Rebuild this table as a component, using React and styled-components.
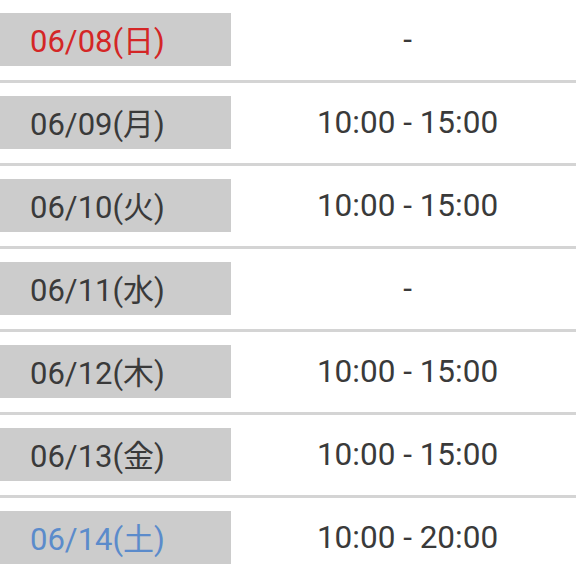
import React from "react";
import styled, { createGlobalStyle } from "styled-components";

const GlobalStyle = createGlobalStyle`
    html, body {
        margin: 0;
        padding: 0;
        background: #fff;
    }
    body {
        font-family: Roboto, "Noto Sans CJK JP", sans-serif;
        color: #3a3a3a;
    }
`;

const Table = styled.div`
    width: 576px;
    display: flex;
    flex-direction: column;
`;

const Row = styled.div`
    display: flex;
    align-items: center;
    padding: 13px 0 14px;
    border-bottom: 3px solid #d4d4d4;
`;

const DateCell = styled.div`
    width: 231px;
    height: 53px;
    flex-shrink: 0;
    box-sizing: border-box;
    padding: 0 0 3px 30px;
    display: flex;
    align-items: center;
    background-color: #cccccc;
    font-size: 31px;
    color: ${(p) => (p.$day === 0 ? "#d42626" : p.$day === 6 ? "#5b8bcb" : "#3a3a3a")};
`;

const TimeCell = styled.div`
    flex: 1;
    padding-left: 8px;
    text-align: center;
    font-size: 31.5px;
    color: #3a3a3a;
`;

const schedule = [
    { date: "06/08(日)", day: 0, time: "-" },
    { date: "06/09(月)", day: 1, time: "10:00 - 15:00" },
    { date: "06/10(火)", day: 2, time: "10:00 - 15:00" },
    { date: "06/11(水)", day: 3, time: "-" },
    { date: "06/12(木)", day: 4, time: "10:00 - 15:00" },
    { date: "06/13(金)", day: 5, time: "10:00 - 15:00" },
    { date: "06/14(土)", day: 6, time: "10:00 - 20:00" },
];

const App = () => {
    return (
        <>
            <GlobalStyle />
            <Table>
                {schedule.map((row) => (
                    <Row key={row.date}>
                        <DateCell $day={row.day}>{row.date}</DateCell>
                        <TimeCell>{row.time}</TimeCell>
                    </Row>
                ))}
            </Table>
        </>
    );
};

export default App;
